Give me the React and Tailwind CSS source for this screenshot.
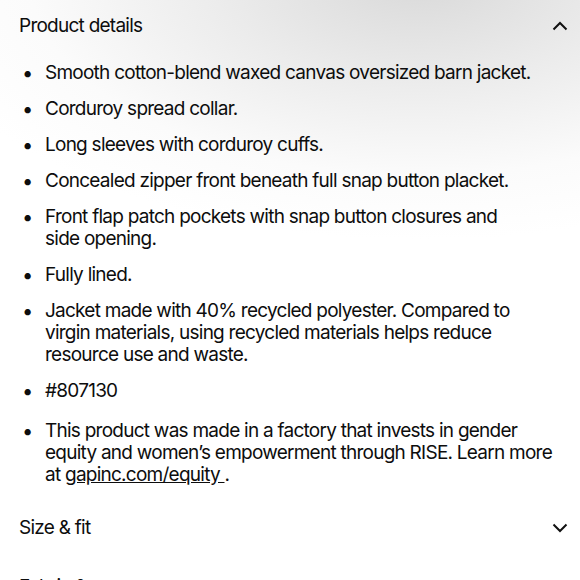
import React from "react";

const items = [
  "Smooth cotton-blend waxed canvas oversized barn jacket.",
  "Corduroy spread collar.",
  "Long sleeves with corduroy cuffs.",
  "Concealed zipper front beneath full snap button placket.",
  <>
    Front flap patch pockets with snap button closures and
    <br />
    side opening.
  </>,
  "Fully lined.",
  "Jacket made with 40% recycled polyester. Compared to virgin materials, using recycled materials helps reduce resource use and waste.",
  "#807130",
];

function Chevron({ up }) {
  return (
    <svg width="16" height="10" viewBox="0 0 16 10" fill="none" className="shrink-0">
      <path
        d={up ? "M1.5 8.5 L8 2 L14.5 8.5" : "M1.5 1.5 L8 8 L14.5 1.5"}
        stroke="#111"
        strokeWidth="2"
      />
    </svg>
  );
}

function Item({ children, className = "" }) {
  return (
    <li className={"flex " + className}>
      <span className="w-[26px] shrink-0 pl-[3px] text-[20px]">•</span>
      <span className="flex-1">{children}</span>
    </li>
  );
}

export default function App() {
  return (
    <div
      className="w-[580px] h-[580px] overflow-hidden text-[#0d0d0d] bg-[radial-gradient(ellipse_520px_260px_at_420px_-20px,#d9d9d9_0%,#ececec_40%,#fbfbfb_75%,#ffffff_100%)]"
      style={{ fontFamily: "Inter, 'Liberation Sans', sans-serif" }}
    >
      <div className="px-[19px] text-[19px] leading-[22px] tracking-[-0.75px]">
        <div className="flex items-center justify-between pt-[15px] -mr-[7px]">
          <span>Product details</span>
          <Chevron up />
        </div>
        <ul className="mt-[25px] flex flex-col gap-[14px] pr-[4px]">
          {items.map((t, i) => (
            <Item key={i}>{t}</Item>
          ))}
          <Item className="mt-[4px]">
            This product was made in a factory that invests in gender equity and women’s empowerment through RISE. Learn more at{" "}
            <span className="underline">gapinc.com/equity&nbsp;</span>.
          </Item>
        </ul>
        <div className="flex items-center justify-between mt-[31px] -mr-[7px]">
          <span>Size &amp; fit</span>
          <Chevron />
        </div>
        <div className="flex items-center justify-between mt-[37px] -mr-[7px]">
          <span>Fabric &amp; care</span>
          <Chevron />
        </div>
      </div>
    </div>
  );
}
